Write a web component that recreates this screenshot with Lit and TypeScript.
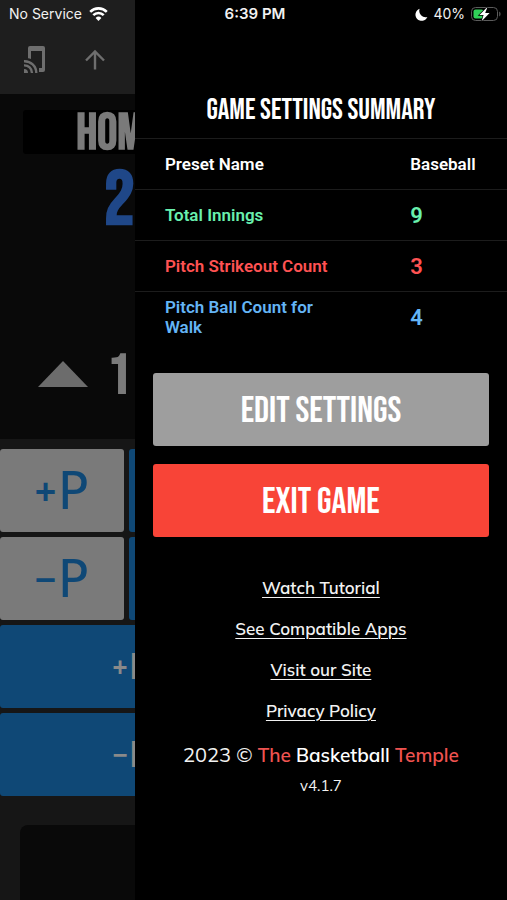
import { LitElement, html, css } from "lit";
import { customElement } from "lit/decorators.js";

interface Setting {
  label: string;
  value: string;
  tone: string;
}

const SETTINGS: Setting[] = [
  { label: "Preset Name", value: "Baseball", tone: "name" },
  { label: "Total Innings", value: "9", tone: "green" },
  { label: "Pitch Strikeout Count", value: "3", tone: "red" },
  { label: "Pitch Ball Count for Walk", value: "4", tone: "blue" },
];

const LINKS = ["Watch Tutorial", "See Compatible Apps", "Visit our Site", "Privacy Policy"];

@customElement("status-bar")
class StatusBar extends LitElement {
  static styles = css`
    :host {
      display: grid;
      grid-template-columns: 1fr auto 1fr;
      align-items: center;
      height: 28px;
      padding: 0 6px 0 9px;
      color: #f2f2f2;
      font: 14px/20px Inter, "Liberation Sans", sans-serif;
    }
    .side {
      display: flex;
      align-items: center;
      gap: 7px;
    }
    .right {
      justify-content: flex-end;
      gap: 5px;
    }
    .time {
      font-weight: 600;
      font-size: 15px;
    }
    svg {
      display: block;
    }
  `;
  render() {
    return html`
      <div class="side">
        <span>No Service</span>
        <svg width="19" height="14" viewBox="0 0 19 14" fill="none" stroke="#fff" stroke-width="2.6">
          <path d="M1.2 4.8a11.8 11.8 0 0 1 16.6 0" />
          <path d="M4.3 8.1a7.4 7.4 0 0 1 10.4 0" />
          <path d="M9.5 14 6.6 11a4.2 4.2 0 0 1 5.8 0z" fill="#fff" stroke="none" />
        </svg>
      </div>
      <div class="time">6:39 PM</div>
      <div class="side right">
        <svg width="13" height="13" viewBox="0 0 13 13">
          <path d="M4.6.8A6.2 6.2 0 1 0 12.4 9 6.4 6.4 0 0 1 4.6.8z" fill="#fff" />
        </svg>
        <span>40%</span>
        <svg width="31" height="16" viewBox="0 0 31 16">
          <rect x="1.5" y="1.5" width="26" height="13" rx="4" fill="none" stroke="#5c5c5c" />
          <path d="M29.2 5.5c1.8.8 1.8 4.2 0 5z" fill="#5c5c5c" />
          <rect x="3.5" y="3.5" width="10" height="9" rx="2" fill="#30d158" />
          <path d="M17.6.8 9.4 9h4.2l-2 6.2L19.6 7h-4.4z" fill="#fff" stroke="#000" stroke-width="1.4" paint-order="stroke" />
        </svg>
      </div>
    `;
  }
}

@customElement("score-board")
class ScoreBoard extends LitElement {
  static styles = css`
    :host {
      display: flex;
      flex-direction: column;
      background: #161616;
      color: #7a7a7a;
      font-family: "Bebas Neue", "Liberation Sans Narrow", "Liberation Sans", sans-serif;
      font-weight: 700;
    }
    button {
      border: 0;
      padding: 0;
      margin: 0;
      background: none;
      color: inherit;
      font: inherit;
    }
    svg {
      display: block;
    }
    .tools {
      display: flex;
      gap: 34px;
      padding: 46px 21px 20px;
      background: #1e1e1e;
    }
    .board {
      display: flex;
      flex-direction: column;
      height: 345px;
      background: #090909;
    }
    .team {
      width: 38%;
      margin: 16px 23px 0;
      text-align: center;
    }
    .name {
      padding-top: 4px;
      background: #000;
      border-radius: 3px;
      font-size: 50px;
      line-height: 40px;
    }
    .score {
      padding-top: 14px;
      color: #1f4788;
      font-size: 76px;
      line-height: 68px;
    }
    .inning {
      display: flex;
      align-items: center;
      gap: 20px;
      margin-top: 105px;
      padding-left: 38px;
      font-size: 56px;
      line-height: 60px;
    }
    .inning span {
      padding-top: 6px;
    }
    .pad {
      display: grid;
      grid-template-columns: 25fr 27fr 48fr;
      grid-auto-rows: 83px;
      gap: 5px;
      margin-top: 10px;
    }
    .key {
      display: flex;
      align-items: center;
      justify-content: center;
      gap: 2px;
      border-radius: 3px;
      background: #0f4876;
      color: #8a8a8a;
      font: 36px/40px "DejaVu Sans Mono", monospace;
    }
    .sign {
      font-weight: 700;
      font-size: 34px;
    }
    .wide .sign {
      font-size: 24px;
    }
    .pitch {
      background: #7a7a7a;
      color: #0f4876;
      font-size: 52px;
    }
    .wide {
      grid-column: span 2;
    }
    .card {
      flex: 1;
      min-height: 75px;
      margin: 29px 20px 0;
      border-radius: 8px 8px 0 0;
      background: #090909;
    }
  `;
  render() {
    return html`
      <div class="tools">
        <button aria-label="Cast">
          <svg width="28" height="28" viewBox="0 0 28 28" fill="#6e6e6e">
            <path d="M9 0h13q2 0 2 2v22q0 2-2 2h-4v-4h3V5H10v8q-1.5-.8-3-.8V2q0-2 2-2z" />
            <g fill="none" stroke="#6e6e6e" stroke-width="2.4">
              <path d="M3 15.2A11.8 11.8 0 0 1 15.3 27" />
              <path d="M3 19.4A7.6 7.6 0 0 1 11 27" />
            </g>
            <path d="M3 23a4 4 0 0 1 4 4H3z" />
          </svg>
        </button>
        <button aria-label="Up">
          <svg width="24" height="28" viewBox="0 0 24 28" fill="none" stroke="#6e6e6e" stroke-width="2.4">
            <path d="M12 23.5V5.5M3 14.5 12 5.5l9 9" />
          </svg>
        </button>
      </div>
      <div class="board">
        <div class="team">
          <div class="name">HOME</div>
          <div class="score">2</div>
        </div>
        <div class="inning">
          <svg width="50" height="26" viewBox="0 0 50 26"><path d="M25 0 50 26H0z" fill="#6c6c6c" /></svg>
          <span>1</span>
        </div>
      </div>
      <div class="pad">
        <button class="key pitch"><span class="sign">+</span>P</button>
        <button class="key"></button>
        <button class="key"></button>
        <button class="key pitch"><span class="sign">−</span>P</button>
        <button class="key"></button>
        <button class="key"></button>
        <button class="key wide"><span class="sign">+</span>B</button>
        <button class="key"></button>
        <button class="key wide"><span class="sign">−</span>B</button>
        <button class="key"></button>
      </div>
      <div class="card"></div>
    `;
  }
}

@customElement("settings-drawer")
class SettingsDrawer extends LitElement {
  static styles = css`
    :host {
      display: block;
      background: #000;
      color: #fff;
      font-family: Roboto, sans-serif;
    }
    h1,
    .action {
      font-family: "Bebas Neue", "Liberation Sans Narrow", "Liberation Sans", sans-serif;
      font-weight: 400;
    }
    h1 {
      margin: 0;
      padding: 91px 0 7px;
      text-align: center;
      font-size: 29px;
      line-height: 40px;
    }
    table {
      width: 100%;
      border-collapse: collapse;
      table-layout: fixed;
    }
    th,
    td {
      box-sizing: border-box;
      height: 51px;
      padding: 0;
      border-top: 1px solid #1c1c1c;
      text-align: left;
      font-size: 17px;
      line-height: 20px;
      font-weight: 600;
    }
    th {
      width: 74%;
      padding: 0 80px 0 30px;
    }
    td {
      padding-top: 2px;
      font-size: 22px;
      line-height: 24px;
    }
    .name td {
      padding-top: 0;
      font-size: 17px;
    }
    .green {
      color: #69f0ae;
    }
    .red {
      color: #ff5252;
    }
    .blue {
      color: #64b5f6;
    }
    .actions {
      display: flex;
      flex-direction: column;
      gap: 18px;
      padding: 30px 18px;
    }
    .action {
      height: 73px;
      padding: 4px 0 0;
      border: 0;
      border-radius: 3px;
      background: #9e9e9e;
      color: #fff;
      font-size: 37px;
      line-height: 40px;
    }
    .exit {
      background: #f84437;
    }
    nav,
    footer {
      display: flex;
      flex-direction: column;
      align-items: center;
      font-family: Mulish, Lato, sans-serif;
      color: #f2f2f2;
    }
    nav {
      gap: 13px;
      padding-top: 7px;
      font-weight: 600;
      font-size: 17px;
      line-height: 28px;
    }
    a {
      color: inherit;
      text-underline-offset: 3px;
      text-decoration-thickness: 1px;
    }
    footer {
      padding: 14px 0 20px;
      font-size: 20px;
      line-height: 32px;
    }
    .brand {
      font-weight: 600;
      font-size: 19px;
      color: #fff;
    }
    .brand em {
      font-style: normal;
      color: #ef5350;
    }
    .version {
      font-size: 15px;
      line-height: 30px;
    }
  `;
  render() {
    return html`
      <h1>GAME SETTINGS SUMMARY</h1>
      <table>
        ${SETTINGS.map(
          (s) => html`<tr class=${s.tone}>
            <th scope="row">${s.label}</th>
            <td>${s.value}</td>
          </tr>`
        )}
      </table>
      <div class="actions">
        <button class="action">EDIT SETTINGS</button>
        <button class="action exit">EXIT GAME</button>
      </div>
      <nav>${LINKS.map((l) => html`<a href="#">${l}</a>`)}</nav>
      <footer>
        <div>2023 © <span class="brand"><em>The</em> Basketball <em>Temple</em></span></div>
        <div class="version">v4.1.7</div>
      </footer>
    `;
  }
}

@customElement("app-root")
class AppRoot extends LitElement {
  static styles = css`
    :host {
      display: grid;
      position: relative;
      min-height: 100vh;
      overflow: hidden;
      background: #161616;
    }
    .drawer {
      position: absolute;
      inset: 0 0 0 auto;
      width: 73.4%;
    }
    .status {
      position: absolute;
      inset: 0 0 auto 0;
    }
  `;
  render() {
    return html`
      <score-board></score-board>
      <settings-drawer class="drawer"></settings-drawer>
      <status-bar class="status"></status-bar>
    `;
  }
}
